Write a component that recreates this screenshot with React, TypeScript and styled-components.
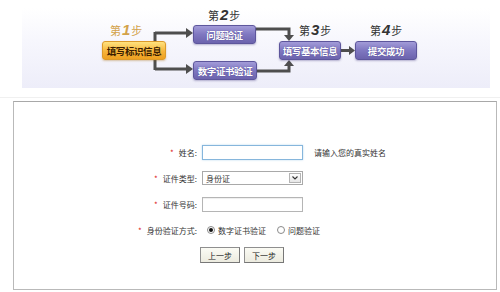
import React from 'react';
import styled, { createGlobalStyle, css } from 'styled-components';

const GlobalStyle = createGlobalStyle`
  body {
    margin: 0;
    background: #fff;
    font-family: "Noto Sans CJK SC", "Noto Sans", sans-serif;
    color: #333;
  }
`;

const Page = styled.div`
  padding-top: 8px;
  width: 500px;
`;

const Banner = styled.div`
  position: relative;
  margin-left: 22px;
  width: 468px;
  height: 80px;
  background: linear-gradient(#ffffff 0%, #f7f7fd 40%, #ededf9 100%);
`;

const Connectors = styled.svg`
  position: absolute;
  left: 0;
  top: 0;
`;

const StepBox = styled.div<{ $x: number; $y: number; $w: number; $tone: 'current' | 'next' }>`
  position: absolute;
  left: ${(p) => p.$x}px;
  top: ${(p) => p.$y}px;
  width: ${(p) => p.$w}px;
  height: 19px;
  box-sizing: border-box;
  border-radius: 3px;
  display: flex;
  align-items: center;
  justify-content: center;
  font-size: 9.5px;
  font-weight: bold;
  white-space: nowrap;
  letter-spacing: -0.4px;
  ${(p) =>
    p.$tone === 'current'
      ? css`
          background: linear-gradient(#ffe27e, #f6b43a 55%, #eea020);
          border: 1px solid #dc9a2a;
          color: #3a1d00;
          box-shadow: 0 1px 2px rgba(160, 100, 0, 0.35);
        `
      : css`
          background: linear-gradient(#a29bd8, #7f77c0 50%, #6c63ad);
          border: 1px solid #5d569c;
          color: #fff;
          text-shadow: 0 0 1px #3e3780;
          box-shadow: 0 1px 2px rgba(60, 50, 120, 0.35);
        `}
`;

const StepLabel = styled.div<{ $x: number; $y: number; $tone: 'current' | 'next' }>`
  position: absolute;
  left: ${(p) => p.$x}px;
  top: ${(p) => p.$y}px;
  display: flex;
  align-items: baseline;
  font-size: 11px;
  line-height: 12px;
  color: ${(p) => (p.$tone === 'current' ? '#d3a24a' : '#333')};
`;

const StepNum = styled.span`
  font-family: "Liberation Sans", Arial, sans-serif;
  font-weight: bold;
  font-style: italic;
  font-size: 15px;
  margin: 0 1px;
`;

const FormArea = styled.div`
  margin-top: 9px;
  border-top: 1px solid #f0f0f0;
  padding-top: 3px;
`;

const FormBox = styled.div`
  margin-left: 13px;
  width: 484px;
  height: 189px;
  box-sizing: border-box;
  border: 1px solid #b9b9b9;
  border-top-color: #a8a8a8;
  padding-top: 37px;
  font-size: 8px;
`;

const Row = styled.div`
  display: flex;
  align-items: center;
  height: 26px;
`;

const Label = styled.div`
  width: 183px;
  margin-right: 5px;
  text-align: right;
  white-space: nowrap;
`;

const Star = styled.span`
  color: #d22;
  margin-right: 5px;
`;

const TextBox = styled.div<{ $focus?: boolean }>`
  width: 101px;
  height: 15px;
  box-sizing: border-box;
  background: #fff;
  border: 1px solid ${(p) => (p.$focus ? '#86b6dc' : '#b5b5b5')};
  box-shadow: ${(p) => (p.$focus ? '0 0 2px #bcd8ee' : 'inset 0 1px 1px #eee')};
`;

const Hint = styled.span`
  margin-left: 11px;
`;

const Select = styled.div`
  width: 101px;
  height: 14px;
  box-sizing: border-box;
  border: 1px solid #a9a9a9;
  display: flex;
  align-items: center;
  justify-content: space-between;
  padding-left: 3px;
  background: #fff;
`;

const SelectArrow = styled.div`
  width: 12px;
  height: 10px;
  margin-right: 1px;
  box-sizing: border-box;
  border: 1px solid #b4b4b4;
  background: linear-gradient(#fff, #e6e6e6);
  display: flex;
  align-items: center;
  justify-content: center;
`;

const RadioGroup = styled.div`
  display: flex;
  align-items: center;
  margin-left: 5px;
`;

const Radio = styled.span<{ $checked?: boolean }>`
  width: 8px;
  height: 8px;
  box-sizing: border-box;
  border-radius: 50%;
  border: 1px solid #8a8a8a;
  background: #fff;
  display: inline-flex;
  align-items: center;
  justify-content: center;
  margin-right: 3px;
  &::after {
    content: '';
    width: 4px;
    height: 4px;
    border-radius: 50%;
    background: ${(p) => (p.$checked ? '#111' : 'transparent')};
  }
`;

const RadioText = styled.span`
  margin-right: 11px;
`;

const Buttons = styled.div`
  display: flex;
  gap: 4px;
  margin-top: 4px;
  padding-left: 186px;
`;

const Button = styled.button`
  width: 40px;
  height: 16px;
  padding: 0;
  font-family: inherit;
  font-size: 8px;
  color: #222;
  border: 1px solid #8f8f8f;
  border-right-color: #777;
  border-bottom-color: #777;
  background: linear-gradient(#fbfbf4, #ecebdf);
  cursor: pointer;
`;

export default () => (
  <Page>
    <GlobalStyle />
    <Banner>
      <Connectors width="468" height="80" viewBox="0 0 468 80">
        <g stroke="#4e4e4e" strokeWidth="3" fill="none">
          <path d="M133 24 V62 M133 25 H165 M133 61 H165" />
          <path d="M234 21 H267 V28 M235 63 H267 V57" />
          <path d="M319 42.5 H328" />
        </g>
        <g fill="#4e4e4e">
          <polygon points="164,20 171,25 164,30" />
          <polygon points="164,56 171,61 164,66" />
          <polygon points="262,27 272,27 267,33" />
          <polygon points="262,58 272,58 267,52" />
          <polygon points="327,38 333,42.5 327,47" />
        </g>
      </Connectors>

      <StepLabel $x={88} $y={16} $tone="current">
        第<StepNum>1</StepNum>步
      </StepLabel>
      <StepBox $x={80} $y={33} $w={64} $tone="current">
        填写标识信息
      </StepBox>

      <StepLabel $x={186} $y={1} $tone="next">
        第<StepNum>2</StepNum>步
      </StepLabel>
      <StepBox $x={171} $y={17} $w={63} $tone="next">
        问题验证
      </StepBox>
      <StepBox $x={171} $y={53} $w={64} $tone="next">
        数字证书验证
      </StepBox>

      <StepLabel $x={277} $y={16} $tone="next">
        第<StepNum>3</StepNum>步
      </StepLabel>
      <StepBox $x={257} $y={33} $w={62} $tone="next">
        填写基本信息
      </StepBox>

      <StepLabel $x={348} $y={16} $tone="next">
        第<StepNum>4</StepNum>步
      </StepLabel>
      <StepBox $x={333} $y={33} $w={62} $tone="next">
        提交成功
      </StepBox>
    </Banner>

    <FormArea>
      <FormBox>
        <Row>
          <Label>
            <Star>*</Star>姓名:
          </Label>
          <TextBox $focus />
          <Hint>请输入您的真实姓名</Hint>
        </Row>
        <Row>
          <Label>
            <Star>*</Star>证件类型:
          </Label>
          <Select>
            身份证
            <SelectArrow>
              <svg width="6" height="4" viewBox="0 0 6 4">
                <path d="M0.5 0.5 L3 3 L5.5 0.5" stroke="#333" strokeWidth="1.1" fill="none" />
              </svg>
            </SelectArrow>
          </Select>
        </Row>
        <Row>
          <Label>
            <Star>*</Star>证件号码:
          </Label>
          <TextBox />
        </Row>
        <Row>
          <Label>
            <Star>*</Star>身份验证方式:
          </Label>
          <RadioGroup>
            <Radio $checked />
            <RadioText>数字证书验证</RadioText>
            <Radio />
            <RadioText>问题验证</RadioText>
          </RadioGroup>
        </Row>
        <Buttons>
          <Button>上一步</Button>
          <Button>下一步</Button>
        </Buttons>
      </FormBox>
    </FormArea>
  </Page>
);
